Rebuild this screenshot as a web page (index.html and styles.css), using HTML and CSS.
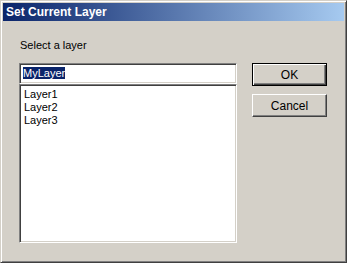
FILE: index.html
```html
<!DOCTYPE html>
<html>
<head>
  <title>Set Current Layer</title>
  <link rel="stylesheet" href="styles.css">
</head>
<body>
  <div class="window">
    <div class="titlebar">Set Current Layer</div>
    <div class="content">
      <div class="left">
        <div class="label">Select a layer</div>
        <div class="edit"><span class="selected">MyLayer</span></div>
        <div class="list">
          <div class="item">Layer1</div>
          <div class="item">Layer2</div>
          <div class="item">Layer3</div>
        </div>
      </div>
      <div class="right">
        <div class="button default"><span>OK</span></div>
        <div class="button"><span>Cancel</span></div>
      </div>
    </div>
  </div>
</body>
</html>
```

FILE: styles.css
```css
html, body {
  margin: 0;
  padding: 0;
  background: #d4d0c8;
  font-family: "Liberation Sans", Arial, sans-serif;
  font-size: 11px;
  color: black;
}

.window {
  width: 347px;
  height: 263px;
  box-sizing: border-box;
  background: #d4d0c8;
  border: 1px solid;
  border-color: #d4d0c8 #404040 #404040 #d4d0c8;
  box-shadow: inset 1px 1px 0 #fff, inset -1px -1px 0 #808080;
  padding: 2px;
  display: flex;
  flex-direction: column;
}

.titlebar {
  height: 18px;
  line-height: 18px;
  padding-left: 3px;
  color: white;
  font-family: "Liberation Sans", Arial, sans-serif;
  font-weight: bold;
  font-size: 12px;
  background: linear-gradient(to right, #0a246a, #a6caf0);
}

.content {
  display: flex;
  padding: 0 0 0 16px;
  gap: 15px;
}

.left {
  width: 218px;
  display: flex;
  flex-direction: column;
}

.label {
  margin-top: 18px;
  padding-left: 1px;
  height: 13px;
  line-height: 13px;
}

.edit, .list {
  box-sizing: border-box;
  background: white;
  border: 1px solid;
  border-color: #808080 #fff #fff #808080;
  box-shadow: inset 1px 1px 0 #404040, inset -1px -1px 0 #d4d0c8;
}

.edit {
  margin-top: 11px;
  height: 21px;
  padding: 3px 3px;
  line-height: 13px;
}

.selected {
  background: #0a246a;
  color: white;
}

.list {
  height: 159px;
  padding: 3px 4px;
}

.item {
  height: 13px;
  line-height: 13px;
}

.right {
  display: flex;
  flex-direction: column;
  gap: 8px;
  margin-top: 42px;
}

.button {
  width: 75px;
  height: 23px;
  box-sizing: border-box;
  border: 1px solid;
  border-color: #fff #404040 #404040 #fff;
  box-shadow: inset -1px -1px 0 #808080;
  display: flex;
  align-items: center;
  justify-content: center;
  font-size: 12px;
}

.button.default {
  border: 1px solid #000;
  box-shadow: inset 1px 1px 0 #fff, inset -1px -1px 0 #404040, inset -2px -2px 0 #808080;
}
```
